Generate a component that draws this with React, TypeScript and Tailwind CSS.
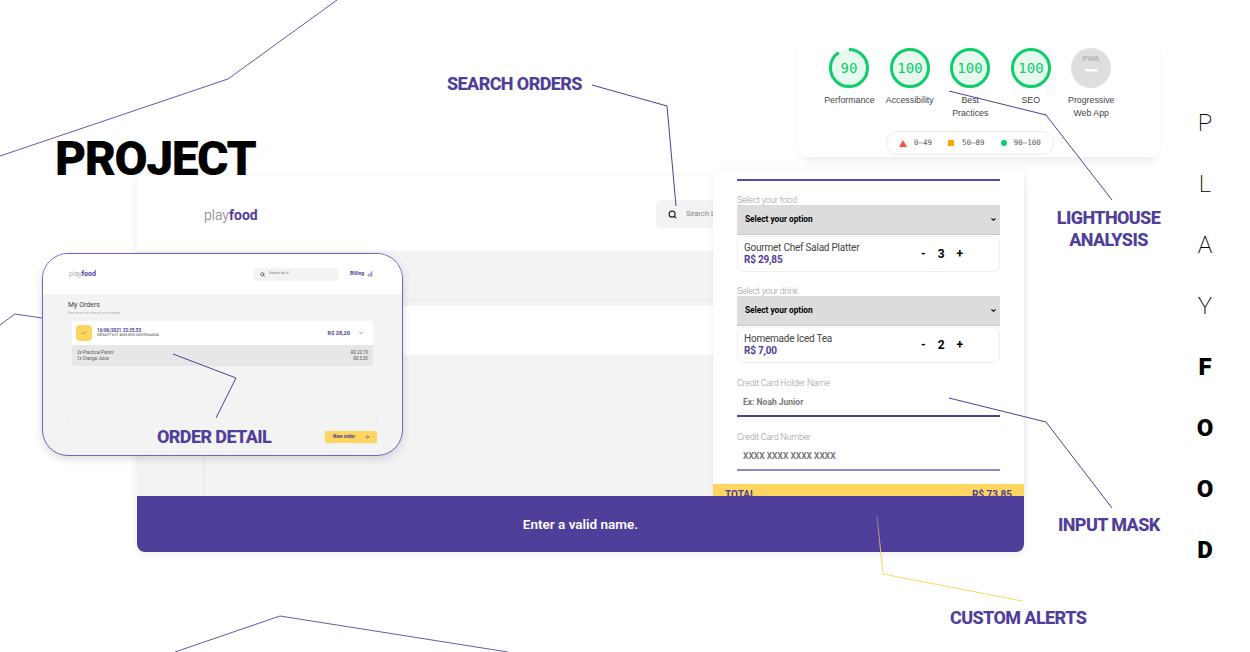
import React from 'react';
import { Search, Check, ChevronDown, ArrowRight, ChartNoAxesColumnIncreasing } from 'lucide-react';

const PURPLE = '#4f3e9a';

const gauges = [
  { label: 'Performance', value: 90 },
  { label: 'Accessibility', value: 100 },
  { label: 'Best Practices', value: 100 },
  { label: 'SEO', value: 100 },
];

function Gauge({ value }: { value: number }) {
  const len = 2 * Math.PI * 18.5;
  return (
    <svg width="40" height="40" viewBox="0 0 40 40">
      <circle cx="20" cy="20" r="18.5" fill="#e7f8ef" stroke="none" />
      <circle
        cx="20"
        cy="20"
        r="18.5"
        fill="none"
        stroke="#0cce6b"
        strokeWidth="3"
        strokeDasharray={`${(len * value) / 100} ${len}`}
        transform="rotate(-90 20 20)"
      />
      <text x="20" y="24.5" textAnchor="middle" fontSize="14" fontFamily="'DejaVu Sans Mono', monospace" fill="#0cce6b">
        {value}
      </text>
    </svg>
  );
}

function Lighthouse() {
  return (
    <div className="absolute left-[798px] top-[30px] w-[362px] h-[127px] bg-white rounded-b-[10px] shadow-[0_8px_10px_-4px_rgba(0,0,0,0.08)] z-10 font-['Liberation_Sans',sans-serif]">
      <div className="flex pl-[21px] pt-[18px]">
        {gauges.map((g) => (
          <div key={g.label} className="w-[60.5px] flex flex-col items-center text-center">
            <Gauge value={g.value} />
            <div className="mt-[6px] text-[8.8px] leading-[13px] text-[#444] w-[50px]">{g.label}</div>
          </div>
        ))}
        <div className="w-[60.5px] flex flex-col items-center text-center">
          <svg width="40" height="40" viewBox="0 0 40 40">
            <circle cx="20" cy="20" r="20" fill="#dedede" />
            <text x="20" y="13" textAnchor="middle" fontSize="7.5" fontWeight="700" fontFamily="'Liberation Sans', sans-serif" fill="#b4b4b4">
              PWA
            </text>
            <rect x="14" y="21" width="12.5" height="2.6" rx="1" fill="#fff" />
          </svg>
          <div className="mt-[6px] w-[60px] text-[8.8px] leading-[13px] text-[#444] whitespace-nowrap flex flex-col items-center">
            <span>Progressive</span>
            <span>Web App</span>
          </div>
        </div>
      </div>
      <div className="absolute left-[88px] top-[101px] w-[168px] h-[24px] rounded-full border border-[#ececec] flex items-center text-[7.5px] text-[#555] font-['DejaVu_Sans_Mono',monospace]">
        <svg className="ml-[12px]" width="8" height="7" viewBox="0 0 8 7">
          <polygon points="4,0 8,7 0,7" fill="#ff4e42" />
        </svg>
        <span className="ml-[7px]">0–49</span>
        <span className="ml-[16px] w-[6px] h-[6px] bg-[#ffa400]" />
        <span className="ml-[8px]">50–89</span>
        <span className="ml-[16px] w-[6px] h-[6px] rounded-full bg-[#0cce6b]" />
        <span className="ml-[7px]">90–100</span>
      </div>
    </div>
  );
}

function FoodPick({ label, item, price, qty }: { label: string; item: string; price: string; qty: number }) {
  return (
    <div className="flex flex-col">
      <div className="text-[9px] tracking-[-0.25px] leading-[12px] font-light text-[#9a9a9a]">{label}</div>
      <div className="relative mt-[-1px]">
        <select className="appearance-none block w-full h-[30px] bg-[#dcdcdc] border-b border-[#c9c9c9] pl-[8px] text-[8.3px] font-bold text-black outline-none">
          <option>Select your option</option>
        </select>
        <ChevronDown size={7} strokeWidth={3.5} className="absolute right-[3px] top-[11px] text-black" />
      </div>
      <div className="mt-[1px] h-[36px] rounded-[6px] border border-[#f0f0f0] flex items-center justify-between pl-[6px] pr-[36px]">
        <div className="flex flex-col">
          <span className="text-[10px] tracking-[-0.23px] leading-[12px] text-[#444]">{item}</span>
          <span className="text-[10px] tracking-[-0.2px] leading-[12px] font-bold text-[#4f3e9a]">{price}</span>
        </div>
        <div className="flex items-center text-[12px] font-bold text-black w-[42px] justify-between">
          <span>-</span>
          <span>{qty}</span>
          <span>+</span>
        </div>
      </div>
    </div>
  );
}

function CardInput({ label, hint, lineClass }: { label: string; hint: string; lineClass: string }) {
  return (
    <div className="flex flex-col">
      <div className="text-[9px] tracking-[-0.25px] leading-[12px] font-light text-[#9a9a9a]">{label}</div>
      <div className={`h-[27px] mt-[1px] border-b-2 pl-[6px] pt-[6px] text-[8.5px] leading-[12px] font-bold text-[#777] ${lineClass}`}>{hint}</div>
    </div>
  );
}

function OrderForm() {
  return (
    <div className="absolute left-[576px] top-[-6px] w-[311px] h-[326px] bg-white shadow-[0_0_6px_rgba(0,0,0,0.06)] flex flex-col overflow-hidden">
      <div className="flex-1 px-[24px] pt-[9px] flex flex-col">
        <div className="h-[2px] bg-[#5a49a8]" />
        <div className="mt-[13px]">
          <FoodPick label="Select your food" item="Gourmet Chef Salad Platter" price="R$ 29,85" qty={3} />
        </div>
        <div className="mt-[13px]">
          <FoodPick label="Select your drink" item="Homemade Iced Tea" price="R$ 7,00" qty={2} />
        </div>
        <div className="mt-[14px]">
          <CardInput label="Credit Card Holder Name" hint="Ex: Noah Junior" lineClass="border-[#4f3e9a]" />
        </div>
        <div className="mt-[14px]">
          <CardInput label="Credit Card Number" hint="XXXX XXXX XXXX XXXX" lineClass="border-[#9385c9]" />
        </div>
      </div>
      <div className="h-[12px] bg-[#fdd55f] flex justify-between px-[12px] text-[10px] leading-[22px] font-bold text-[#4f3e9a]">
        <span>TOTAL</span>
        <span>R$ 73,85</span>
      </div>
    </div>
  );
}

function MainScreen() {
  return (
    <div className="absolute left-[137px] top-[176px] w-[887px] h-[376px] flex flex-col rounded-b-[8px] shadow-[0_2px_8px_rgba(0,0,0,0.08)] bg-white">
      <div className="h-[75px] flex items-center pl-[67px]">
        <span className="mt-[3px] w-[54px] text-[14px] font-light text-[#777] whitespace-nowrap">
          play<b className="font-bold text-[#4f3e9a]">food</b>
        </span>
        <div className="ml-[398px] w-[57px] h-[28px] mt-[1px] rounded-l-[5px] bg-[#f3f3f3] flex items-center pl-[12px] overflow-hidden">
          <Search size={9} strokeWidth={3} className="text-[#222] shrink-0" />
          <span className="ml-[9px] text-[7.5px] text-[#888] whitespace-nowrap">Search by id</span>
        </div>
      </div>
      <div className="flex-1 bg-[#f3f3f3] flex flex-col">
        <div className="h-[49px] border-b border-[#e8e8e8]" />
        <div className="mt-[6px] h-[49px] bg-white" />
        <div className="flex-1 w-[67px] border-r border-[#e8e8e8]" />
      </div>
      <div className="h-[56px] bg-[#4f3e9a] rounded-b-[8px] flex items-center justify-center text-[13.5px] font-semibold text-white relative z-10">
        Enter a valid name.
      </div>
      <OrderForm />
    </div>
  );
}

function MiniScreen() {
  return (
    <div className="absolute left-[42px] top-[253px] w-[361px] h-[203px] rounded-[26px] border border-[#7464bd] bg-[#f3f3f3] overflow-hidden shadow-[0_3px_8px_rgba(0,0,0,0.14)] z-10 flex flex-col">
      <div className="h-[40px] bg-white flex items-center pl-[26px] shrink-0">
        <span className="text-[7px] font-light text-[#888] w-[185px]">
          play<b className="font-bold text-[#4f3e9a]">food</b>
        </span>
        <div className="w-[84px] h-[13px] rounded-[3px] bg-[#f3f3f3] flex items-center pl-[6px]">
          <Search size={5} strokeWidth={3} className="text-[#333]" />
          <span className="ml-[4px] text-[3.6px] text-[#777]">Search by id</span>
        </div>
        <span className="ml-[12px] text-[5px] font-bold text-[#4f3e9a]">Billing</span>
        <ChartNoAxesColumnIncreasing size={6} strokeWidth={3} className="ml-[3px] text-[#4f3e9a]" />
      </div>
      <div className="flex-1 px-[25px] pt-[7px] flex flex-col">
        <div className="text-[7px] leading-[9px] text-[#444]">My Orders</div>
        <div className="text-[3.8px] leading-[5px] text-[#aaa]">Fun down at one of your orders.</div>
        <div className="mt-[3px] h-[106px] rounded-[3px] border border-[#efefef] px-[3px] pt-[2px]">
          <div className="h-[24px] bg-white rounded-t-[2px] flex items-center pl-[4px] pr-[9px]">
            <div className="w-[16px] h-[16px] rounded-[4px] bg-[#fdd55f] flex items-center justify-center">
              <Check size={6} strokeWidth={2} className="text-[#4f3e9a]" />
            </div>
            <div className="ml-[5px] flex flex-col flex-1">
              <span className="text-[4.6px] leading-[5px] font-bold text-[#4f3e9a]">16/06/2021 23:25:53</span>
              <span className="text-[3.4px] leading-[5px] text-[#555]">08064ff7-fe27-4686-8f06-5b5590b6d0d4</span>
            </div>
            <span className="text-[5.6px] font-bold text-[#4f3e9a]">R$ 28,20</span>
            <ChevronDown size={6} strokeWidth={2} className="ml-[8px] text-[#4f3e9a]" />
          </div>
          <div className="h-[21px] bg-[#e7e7e7] rounded-b-[3px] flex justify-between items-center px-[5px] text-[4.6px] leading-[6px] italic text-[#555]">
            <div className="flex flex-col">
              <span>2x Practical Panini</span>
              <span>1x Orange Juice</span>
            </div>
            <div className="flex flex-col items-end">
              <span>R$ 22,70</span>
              <span>R$ 5,50</span>
            </div>
          </div>
        </div>
        <div className="mt-[7px] self-end w-[52px] h-[12px] rounded-[1.5px] bg-[#fdd55f] flex items-center justify-between pl-[8px] pr-[7px]">
          <span className="text-[4.8px] font-bold text-[#4f3e9a]">New order</span>
          <ArrowRight size={6} strokeWidth={2} className="text-[#4f3e9a]" />
        </div>
      </div>
    </div>
  );
}

function Lines() {
  return (
    <svg className="absolute inset-0 z-20 pointer-events-none" width="1250" height="652" fill="none" stroke={PURPLE} strokeWidth="1">
      <defs>
        <linearGradient id="alertLine" gradientUnits="userSpaceOnUse" x1="877" y1="516" x2="882" y2="560">
          <stop offset="0" stopColor="#8a7490" />
          <stop offset="1" stopColor="#fdd55f" />
        </linearGradient>
      </defs>
      <polyline stroke="#6656b0" points="0,156 228,79 337,0" />
      <polyline points="592,85 667,106 676,206" />
      <polyline points="949,91 1046,115 1112,200" />
      <polyline points="949,398 1046,422 1112,508" />
      <polyline points="173,354 236,378 216,418" />
      <polyline stroke="#6656b0" points="0,325 15,314 42,318" />
      <polyline stroke="#6656b0" points="175,652 280,616 508,652" />
      <polyline stroke="url(#alertLine)" points="877,516 883,574" />
      <polyline stroke="#fdd55f" points="883,574 1022,601" />
    </svg>
  );
}

const tagClass = "absolute z-30 text-[18px] leading-[22px] font-extrabold text-[#4f3e9a] whitespace-nowrap tracking-[-0.6px]";

export default function App() {
  return (
    <div className="relative w-[1250px] h-[652px] bg-white overflow-hidden font-['Roboto',sans-serif]">
      <MainScreen />
      <Lighthouse />
      <MiniScreen />
      <Lines />

      <h1 className="absolute left-[55px] top-[131px] text-[48px] leading-[56px] font-black text-black tracking-[-1.5px]">PROJECT</h1>

      <div className={`${tagClass} left-[447px] top-[73px]`}>SEARCH ORDERS</div>
      <div className={`${tagClass} left-[1057px] top-[207px] w-[103px] text-center flex flex-col items-center`}>
        <span>LIGHTHOUSE</span>
        <span>ANALYSIS</span>
      </div>
      <div className={`${tagClass} left-[1058px] top-[514px]`}>INPUT MASK</div>
      <div className={`${tagClass} left-[950px] top-[607px]`}>CUSTOM ALERTS</div>
      <div className={`${tagClass} left-[157px] top-[426px]`}>ORDER DETAIL</div>

      <div className="absolute left-[1190px] top-[93px] w-[30px] flex flex-col items-center text-[24px] leading-[61px] text-black">
        {['P', 'L', 'A', 'Y'].map((c, i) => (
          <span key={i} className="font-extralight">{c}</span>
        ))}
        {['F', 'O', 'O', 'D'].map((c, i) => (
          <span key={i} className="font-black">{c}</span>
        ))}
      </div>
    </div>
  );
}
